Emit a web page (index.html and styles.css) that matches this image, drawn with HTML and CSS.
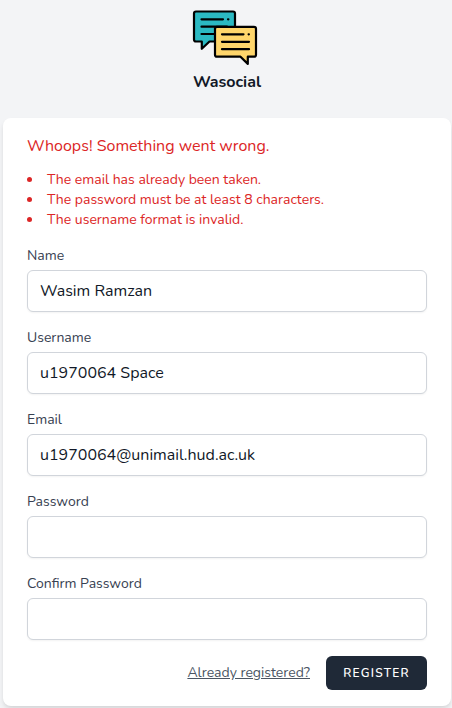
FILE: index.html
```html
<!DOCTYPE html>
<html lang="en">
<head>
<meta charset="utf-8">
<title>Wasocial</title>
<link rel="stylesheet" href="styles.css">
</head>
<body>
<header class="brand">
  <svg class="logo" width="66" height="58" viewBox="0 0 66 58" fill="none" stroke="#000" stroke-width="2.2" stroke-linecap="round" stroke-linejoin="round">
    <path fill="#2bb9c2" d="M4 2.500H41Q43 2.500 43 4.500V32.500H17.500L9.800 39.800V32.500H4Q2 32.500 2 30.500V4.500Q2 2.500 4 2.500Z"/>
    <path d="M9.500 10.300H31M36 10.300H36.400M9.500 17.700H35M9.500 25H24"/>
    <path fill="#ffd66b" d="M25 17.800H62Q64 17.800 64 19.800V45.700Q64 47.700 62 47.700H55.800V54.900L48.500 47.700H25Q23 47.700 23 45.700V19.800Q23 17.800 25 17.800Z"/>
    <path d="M30 25.300H51.500M56.600 25.300H56.900M30 32.800H57M30 40.200H57"/>
  </svg>
  <div class="brand-name">Wasocial</div>
</header>
<main class="card">
  <div class="error-title">Whoops! Something went wrong.</div>
  <ul class="errors">
    <li>The email has already been taken.</li>
    <li>The password must be at least 8 characters.</li>
    <li>The username format is invalid.</li>
  </ul>
  <form>
    <div class="field"><label for="name">Name</label><input id="name" type="text" value="Wasim Ramzan"></div>
    <div class="field"><label for="username">Username</label><input id="username" type="text" value="u1970064 Space"></div>
    <div class="field"><label for="email">Email</label><input id="email" type="email" value="u1970064@unimail.hud.ac.uk"></div>
    <div class="field"><label for="password">Password</label><input id="password" type="password"></div>
    <div class="field"><label for="confirm">Confirm Password</label><input id="confirm" type="password"></div>
    <div class="actions"><a href="#">Already registered?</a><button type="button">REGISTER</button></div>
  </form>
</main>
</body>
</html>
```
FILE: styles.css
```css
* { box-sizing: border-box; }
html { overflow: hidden; }
body {
  margin: 0;
  height: 708px;
  overflow: hidden;
  background: #f3f4f6;
  color: #111827;
  font-family: Nunito, Lato, sans-serif;
  font-size: 16px;
  line-height: 24px;
}
.brand {
  height: 118px;
  padding: 9px 0 0 2px;
  display: flex;
  flex-direction: column;
  align-items: center;
}
.logo { display: block; margin-right: 4px; }
.brand-name { margin-top: 3px; font-weight: 700; }
.card {
  width: 448px;
  height: 588px;
  margin-left: 3px;
  padding: 16px 24px;
  background: #fff;
  border-radius: 8px;
  box-shadow: 0 4px 6px -1px rgba(0, 0, 0, .1), 0 2px 4px -1px rgba(0, 0, 0, .06);
}
.error-title { color: #dc2626; }
.errors {
  margin: 12px 0 16px;
  padding: 0;
  list-style: disc inside;
  color: #dc2626;
  font-size: 14px;
  line-height: 20px;
}
.field { margin-bottom: 16px; }
label {
  display: block;
  margin-bottom: 4px;
  color: #374151;
  font-size: 14px;
  line-height: 20px;
}
input {
  display: block;
  width: 100%;
  height: 42px;
  padding: 8px 12px;
  border: 1px solid #d1d5db;
  border-radius: 6px;
  background: #fff;
  box-shadow: 0 1px 2px rgba(0, 0, 0, .05);
  color: #111827;
  font: inherit;
}
.actions { display: flex; justify-content: flex-end; align-items: center; }
.actions a {
  color: #4b5563;
  font-size: 14px;
  line-height: 20px;
}
button {
  width: 101px;
  height: 34px;
  margin-left: 16px;
  padding: 0;
  border: 0;
  border-radius: 6px;
  background: #1f2937;
  color: #fff;
  font: 600 12px/16px Nunito, "Open Sans", sans-serif;
  letter-spacing: 1.2px;
}
```
